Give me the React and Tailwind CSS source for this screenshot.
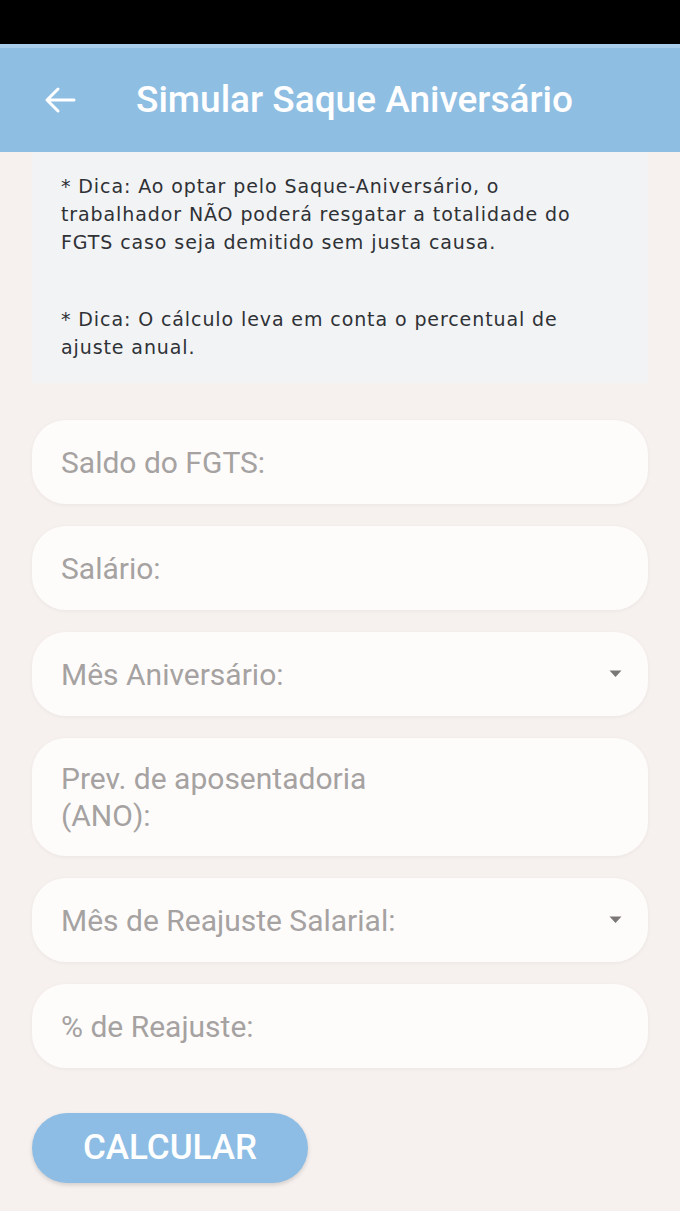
import React from 'react';

function Field({ label, select, tall }) {
  return (
    <div
      className={`flex items-center justify-between rounded-[34px] bg-[#fefcfb] pl-[29px] pr-[26px] shadow-[0_1px_4px_rgba(0,0,0,0.05)] ${
        tall ? 'h-[118px]' : 'h-[84px]'
      }`}
    >
      <span className="text-[30px] leading-[37px] text-[#a5a2a1] w-[340px]">{label}</span>
      {select && (
        <svg width="13" height="8" viewBox="0 0 13 8">
          <path d="M0.5 0.5h12L6.5 7z" fill="#7a7776" />
        </svg>
      )}
    </div>
  );
}

export default function App() {
  return (
    <div className="min-h-screen bg-[#f6f1ef] font-['Roboto','Liberation_Sans',sans-serif]">
      <div className="h-[44px] bg-black" />
      <div className="h-[108px] bg-[#8fbee3] border-t-4 border-[#a7cdeb] flex items-center">
        <svg className="ml-[44px]" width="32" height="28" viewBox="0 0 32 28">
          <path d="M30 14H4M14 3L3 14l11 11" fill="none" stroke="#fff" strokeWidth="3" strokeLinecap="round" strokeLinejoin="round" />
        </svg>
        <h1 className="ml-[60px] text-[37px] font-medium text-white">Simular Saque Aniversário</h1>
      </div>

      <div className="mx-[32px] bg-[#f1f3f5] pl-[29px] pr-[20px] pt-[20px] pb-[22px] font-['DejaVu_Sans',sans-serif] text-[19px] leading-[28px] tracking-[0.9px] text-[#2f3135] whitespace-nowrap">
        <p>
          * Dica: Ao optar pelo Saque-Aniversário, o<br />
          trabalhador NÃO poderá resgatar a totalidade do<br />
          FGTS caso seja demitido sem justa causa.
        </p>
        <p className="mt-[49px]">
          * Dica: O cálculo leva em conta o percentual de<br />
          ajuste anual.
        </p>
      </div>

      <div className="mx-[32px] mt-[37px] flex flex-col gap-[22px]">
        <Field label="Saldo do FGTS:" />
        <Field label="Salário:" />
        <Field label="Mês Aniversário:" select />
        <Field label="Prev. de aposentadoria (ANO):" tall />
        <Field label="Mês de Reajuste Salarial:" select />
        <Field label="% de Reajuste:" />
      </div>

      <div className="mx-[32px] mt-[45px] pb-[28px]">
        <button className="h-[70px] w-[276px] rounded-full bg-[#8dbde4] text-white text-[35px] font-medium shadow-[0_2px_4px_rgba(0,0,0,0.15)]">
          CALCULAR
        </button>
      </div>
    </div>
  );
}
